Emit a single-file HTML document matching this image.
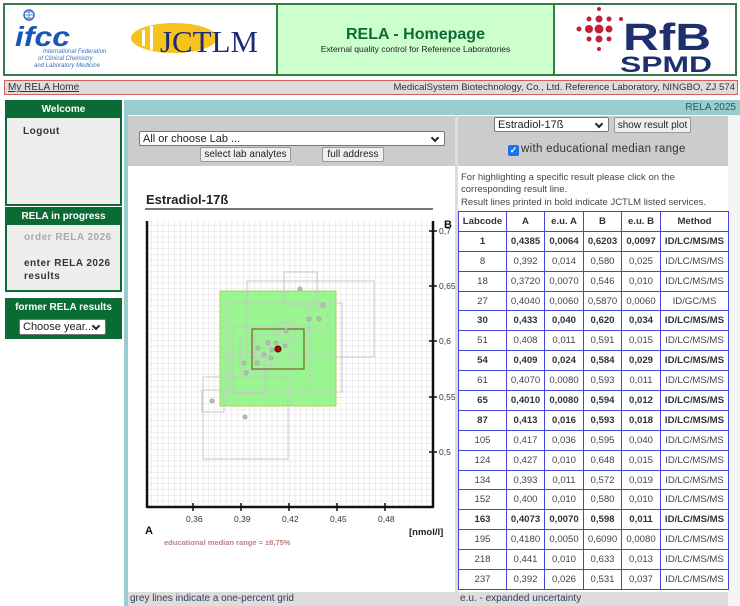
<!DOCTYPE html>
<html><head><meta charset="utf-8"><style>
*{margin:0;padding:0;box-sizing:border-box}
body{width:740px;height:606px;overflow:hidden;background:#fff;font-family:"Liberation Sans",Arial,sans-serif;position:relative}
.a{position:absolute}
.btn{position:absolute;background:#efefef;border:1px solid #999;border-radius:2px;font-size:10px;color:#222;text-align:center;line-height:13px;white-space:nowrap}
.sel{position:absolute;background:#fff;border:1px solid #777;border-radius:2px;font-size:11px;color:#222;padding-left:3px;line-height:14px;white-space:nowrap;overflow:hidden}
.sel:after{content:"";position:absolute;right:6px;top:3px;width:4px;height:4px;border-right:2px solid #222;border-bottom:2px solid #222;transform:rotate(45deg)}
table{border-collapse:collapse;position:absolute;left:458px;top:211px;width:270px;font-size:9.6px;color:#444;table-layout:fixed}
td{border:1px solid #4444dd;height:19.9px;text-align:center;padding:0;white-space:nowrap;overflow:hidden}
tr.b td{font-weight:bold;color:#333}
.sb{position:absolute;left:5px;width:117px;border:2px solid #0b6b35;background:#eee}
.sbh{background:#0b6b35;color:#fff;font-weight:bold;font-size:10px;text-align:center;height:16px;line-height:16px}
</style></head><body>
<div class="a" style="left:3px;top:3px;width:734px;height:73px;border:2px solid #3a7a4a"></div>
<div class="a" style="left:276px;top:5px;width:2px;height:69px;background:#3a7a4a"></div>
<div class="a" style="left:553px;top:5px;width:2px;height:69px;background:#3a7a4a"></div>
<div class="a" style="left:278px;top:5px;width:275px;height:69px;background:#ccffcc"></div>
<div class="a" style="left:278px;top:26px;width:275px;text-align:center;font-size:16px;font-weight:bold;color:#0b6b35">RELA - Homepage</div>
<div class="a" style="left:278px;top:44px;width:275px;text-align:center;font-size:8.5px;color:#222">External quality control for Reference Laboratories</div>
<svg class="a" style="left:10px;top:6px" width="115" height="64">
<circle cx="19" cy="9" r="5" fill="#fff" stroke="#3a6fc0" stroke-width="1.5"/><path d="M14 9h10M19 4v10M15 6h8M15 12h8" stroke="#3a6fc0" stroke-width=".8"/>
<text x="5" y="40" font-family="Liberation Sans" font-weight="bold" font-style="italic" font-size="28" fill="#1a56b8" textLength="55" lengthAdjust="spacingAndGlyphs">ifcc</text>
<text x="33" y="47" font-size="6" font-style="italic" fill="#3a6fc0">International Federation</text>
<text x="28" y="54" font-size="6" font-style="italic" fill="#3a6fc0">of Clinical Chemistry</text>
<text x="24" y="61" font-size="6" font-style="italic" fill="#3a6fc0">and Laboratory Medicine</text>
</svg>
<svg class="a" style="left:128px;top:18px" width="140" height="42">
<ellipse cx="46" cy="20" rx="43" ry="15" fill="#f6c31c"/>
<rect x="14" y="12" width="3" height="16" fill="#fff"/><rect x="22" y="8" width="3" height="24" fill="#fff"/>
<text x="32" y="34" font-family="Liberation Serif" font-size="31" fill="#1c2a78" textLength="98" lengthAdjust="spacingAndGlyphs">JCTLM</text>
</svg>
<svg class="a" style="left:575px;top:6px" width="150" height="68">
<g fill="#c0203a">
<circle cx="24" cy="3" r="2"/><circle cx="24" cy="13" r="3.5"/><circle cx="14" cy="13" r="2.5"/><circle cx="34" cy="13" r="2.5"/><circle cx="46" cy="13" r="2"/>
<circle cx="4" cy="23" r="2.5"/><circle cx="14" cy="23" r="4"/><circle cx="24" cy="23" r="4.5"/><circle cx="34" cy="23" r="3.5"/>
<circle cx="14" cy="33" r="2.5"/><circle cx="24" cy="33" r="3.5"/><circle cx="34" cy="33" r="2.5"/><circle cx="24" cy="43" r="2"/>
</g>
<text x="48" y="44" font-family="Liberation Sans" font-weight="bold" font-size="38" fill="#1e2f6e" textLength="88" lengthAdjust="spacingAndGlyphs">RfB</text>
<text x="45" y="66" font-family="Liberation Sans" font-weight="bold" font-size="22" fill="#1e2f6e" textLength="92" lengthAdjust="spacingAndGlyphs">SPMD</text>
</svg>
<div class="a" style="left:4px;top:80px;width:734px;height:15px;background:#ddd;border:1px solid #d06060"></div>
<div class="a" style="left:8px;top:82px;font-size:10px;color:#333;text-decoration:underline">My RELA Home</div>
<div class="a" style="right:5px;top:82px;font-size:9.6px;color:#333">MedicalSystem Biotechnology, Co., Ltd. Reference Laboratory, NINGBO, ZJ 574</div>
<div class="sb" style="top:100px;height:106px"><div class="sbh">Welcome</div>
<div style="font-size:10px;font-weight:bold;color:#333;padding:8px 0 0 16px;letter-spacing:.5px">Logout</div></div>
<div class="sb" style="top:207px;height:85px"><div class="sbh">RELA in progress</div>
<div style="font-size:10px;font-weight:bold;color:#aaa;padding:7px 0 0 17px;letter-spacing:.5px">order RELA 2026</div>
<div style="font-size:10px;font-weight:bold;color:#333;padding:14px 0 0 17px;letter-spacing:.5px;line-height:13px">enter RELA 2026<br>results</div></div>
<div class="a" style="left:5px;top:298px;width:117px;height:41px;background:#0b6b35"></div>
<div class="a" style="left:5px;top:302px;width:117px;text-align:center;color:#fff;font-weight:bold;font-size:10px">former RELA results</div>
<div class="sel" style="left:19px;top:319px;width:87px;height:16px;font-size:11px">Choose year...</div>
<div class="a" style="left:124px;top:100px;width:4px;height:506px;background:#99cccc"></div>
<div class="a" style="left:124px;top:100px;width:616px;height:15px;background:#99cccc"></div>
<div class="a" style="right:4px;top:102px;font-size:10px;color:#2a5a5a">RELA 2025</div>
<div class="a" style="left:128px;top:116px;width:327px;height:50px;background:#ccc"></div>
<div class="a" style="left:455px;top:115px;width:3px;height:491px;background:#ddd"></div>
<div class="a" style="left:458px;top:116px;width:270px;height:50px;background:#ccc"></div>
<div class="a" style="left:728px;top:115px;width:12px;height:491px;background:#f4f4f4"></div>
<div class="sel" style="left:139px;top:131px;width:306px;height:15px">All or choose Lab ...</div>
<div class="btn" style="left:200px;top:147px;width:91px;height:15px">select lab analytes</div>
<div class="btn" style="left:322px;top:147px;width:62px;height:15px">full address</div>
<div class="sel" style="left:494px;top:117px;width:115px;height:15px">Estradiol-17ß</div>
<div class="btn" style="left:614px;top:117px;width:77px;height:16px;line-height:15px">show result plot</div>
<div class="a" style="left:508px;top:145px;width:11px;height:11px;background:#1a73e8;border-radius:2px;color:#fff;font-size:9px;line-height:11px;text-align:center;font-weight:bold">✓</div>
<div class="a" style="left:521px;top:143px;font-size:11.5px;color:#333;letter-spacing:.3px">with educational median range</div>
<div class="a" style="left:461px;top:172px;font-size:9.5px;color:#444;line-height:11.5px">For highlighting a specific result please click on the<br>corresponding result line.</div>
<div class="a" style="left:461px;top:197px;font-size:9.5px;color:#444">Result lines printed in bold indicate JCTLM listed services.</div>
<div class="a" style="left:146px;top:192px;font-size:13px;font-weight:bold;color:#222">Estradiol-17ß</div>
<div class="a" style="left:145px;top:208px;width:288px;height:2px;background:#777"></div>
<svg class="a" style="left:0;top:0" width="455" height="606">
<defs><pattern id="g" x="146" y="220" width="5.74" height="5.74" patternUnits="userSpaceOnUse"><path d="M5.74 0V5.74H0" fill="none" stroke="#d4d4d4" stroke-width=".8"/></pattern></defs>
<rect x="146" y="220" width="287" height="287" fill="url(#g)"/>
<rect x="220" y="291" width="116" height="115" fill="#99f58f" stroke="#b0d060" stroke-width="1"/>
<g fill="none" stroke="#c8c8c8" stroke-width="1">
<rect x="284" y="272" width="33" height="33"/><rect x="247" y="281" width="127" height="76"/><rect x="308" y="308" width="20" height="22"/>
<rect x="227" y="303" width="115" height="89"/><rect x="233" y="327" width="77" height="65"/><rect x="230" y="352" width="35" height="41"/>
<rect x="278" y="323" width="17" height="18"/><rect x="203" y="377" width="85" height="82"/><rect x="202" y="390" width="22" height="22"/>
<rect x="240" y="340" width="30" height="30"/><rect x="255" y="335" width="35" height="30"/>
</g>
<rect x="252" y="329" width="52" height="40" fill="none" stroke="#7a3a20" stroke-width="1"/>
<g fill="#bbb" stroke="#aaa">
<circle cx="300" cy="289" r="2"/><circle cx="323" cy="305" r="2"/><circle cx="309" cy="319" r="2"/><circle cx="319" cy="319" r="2"/><circle cx="286" cy="331" r="2"/>
<circle cx="258" cy="348" r="2"/><circle cx="268" cy="343" r="2"/><circle cx="276" cy="343" r="2"/><circle cx="264" cy="355" r="2"/><circle cx="272" cy="350" r="2"/>
<circle cx="285" cy="346" r="2"/><circle cx="244" cy="363" r="2"/><circle cx="246" cy="373" r="2"/><circle cx="257" cy="363" r="2"/><circle cx="212" cy="401" r="2"/><circle cx="245" cy="417" r="2"/><circle cx="271" cy="358" r="2"/>
</g>
<circle cx="278" cy="349" r="3" fill="#b00000" stroke="#500"/>
<path d="M147 221V507H433V221" fill="none" stroke="#111" stroke-width="2.5" stroke-linejoin="round"/>
<g stroke="#111" stroke-width="1.5"><path d="M193 503v8M241 503v8M289 503v8M337 503v8M385 503v8M429 231h8M429 286h8M429 341h8M429 397h8M429 452h8"/></g>
<g font-family="Liberation Sans" font-size="8.5" fill="#333">
<text x="186" y="522">0,36</text><text x="234" y="522">0,39</text><text x="282" y="522">0,42</text><text x="330" y="522">0,45</text><text x="378" y="522">0,48</text>
<text x="439" y="234">0,7</text><text x="439" y="289">0,65</text><text x="439" y="344">0,6</text><text x="439" y="400">0,55</text><text x="439" y="455">0,5</text>
</g>
<text x="444" y="228" font-size="11" font-weight="bold" fill="#111">B</text>
<text x="145" y="534" font-size="11" font-weight="bold" fill="#111">A</text>
<text x="409" y="535" font-size="9.5" font-weight="bold" fill="#222">[nmol/l]</text>
<text x="164" y="545" font-size="7.5" font-weight="bold" fill="#c08080">educational median range = ±8,75%</text>
</svg>
<div class="a" style="left:128px;top:592px;width:327px;height:14px;background:#ddd;font-size:10px;color:#3a3a5a;padding-left:2px;line-height:14px">grey lines indicate a one-percent grid</div>
<div class="a" style="left:458px;top:592px;width:270px;height:14px;background:#ddd;font-size:10px;color:#3a3a5a;padding-left:2px;line-height:14px">e.u. - expanded uncertainty</div>
<table>
<col style="width:48px"><col style="width:38px"><col style="width:39px"><col style="width:38px"><col style="width:39px"><col style="width:68px">
<tr class="b"><td>Labcode</td><td>A</td><td>e.u. A</td><td>B</td><td>e.u. B</td><td>Method</td></tr>
<tr class="b"><td>1</td><td>0,4385</td><td>0,0064</td><td>0,6203</td><td>0,0097</td><td>ID/LC/MS/MS</td></tr>
<tr><td>8</td><td>0,392</td><td>0,014</td><td>0,580</td><td>0,025</td><td>ID/LC/MS/MS</td></tr>
<tr><td>18</td><td>0,3720</td><td>0,0070</td><td>0,546</td><td>0,010</td><td>ID/LC/MS/MS</td></tr>
<tr><td>27</td><td>0,4040</td><td>0,0060</td><td>0,5870</td><td>0,0060</td><td>ID/GC/MS</td></tr>
<tr class="b"><td>30</td><td>0,433</td><td>0,040</td><td>0,620</td><td>0,034</td><td>ID/LC/MS/MS</td></tr>
<tr><td>51</td><td>0,408</td><td>0,011</td><td>0,591</td><td>0,015</td><td>ID/LC/MS/MS</td></tr>
<tr class="b"><td>54</td><td>0,409</td><td>0,024</td><td>0,584</td><td>0,029</td><td>ID/LC/MS/MS</td></tr>
<tr><td>61</td><td>0,4070</td><td>0,0080</td><td>0,593</td><td>0,011</td><td>ID/LC/MS/MS</td></tr>
<tr class="b"><td>65</td><td>0,4010</td><td>0,0080</td><td>0,594</td><td>0,012</td><td>ID/LC/MS/MS</td></tr>
<tr class="b"><td>87</td><td>0,413</td><td>0,016</td><td>0,593</td><td>0,018</td><td>ID/LC/MS/MS</td></tr>
<tr><td>105</td><td>0,417</td><td>0,036</td><td>0,595</td><td>0,040</td><td>ID/LC/MS/MS</td></tr>
<tr><td>124</td><td>0,427</td><td>0,010</td><td>0,648</td><td>0,015</td><td>ID/LC/MS/MS</td></tr>
<tr><td>134</td><td>0,393</td><td>0,011</td><td>0,572</td><td>0,019</td><td>ID/LC/MS/MS</td></tr>
<tr><td>152</td><td>0,400</td><td>0,010</td><td>0,580</td><td>0,010</td><td>ID/LC/MS/MS</td></tr>
<tr class="b"><td>163</td><td>0,4073</td><td>0,0070</td><td>0,598</td><td>0,011</td><td>ID/LC/MS/MS</td></tr>
<tr><td>195</td><td>0,4180</td><td>0,0050</td><td>0,6090</td><td>0,0080</td><td>ID/LC/MS/MS</td></tr>
<tr><td>218</td><td>0,441</td><td>0,010</td><td>0,633</td><td>0,013</td><td>ID/LC/MS/MS</td></tr>
<tr><td>237</td><td>0,392</td><td>0,026</td><td>0,531</td><td>0,037</td><td>ID/LC/MS/MS</td></tr>
</table>
</body></html>
